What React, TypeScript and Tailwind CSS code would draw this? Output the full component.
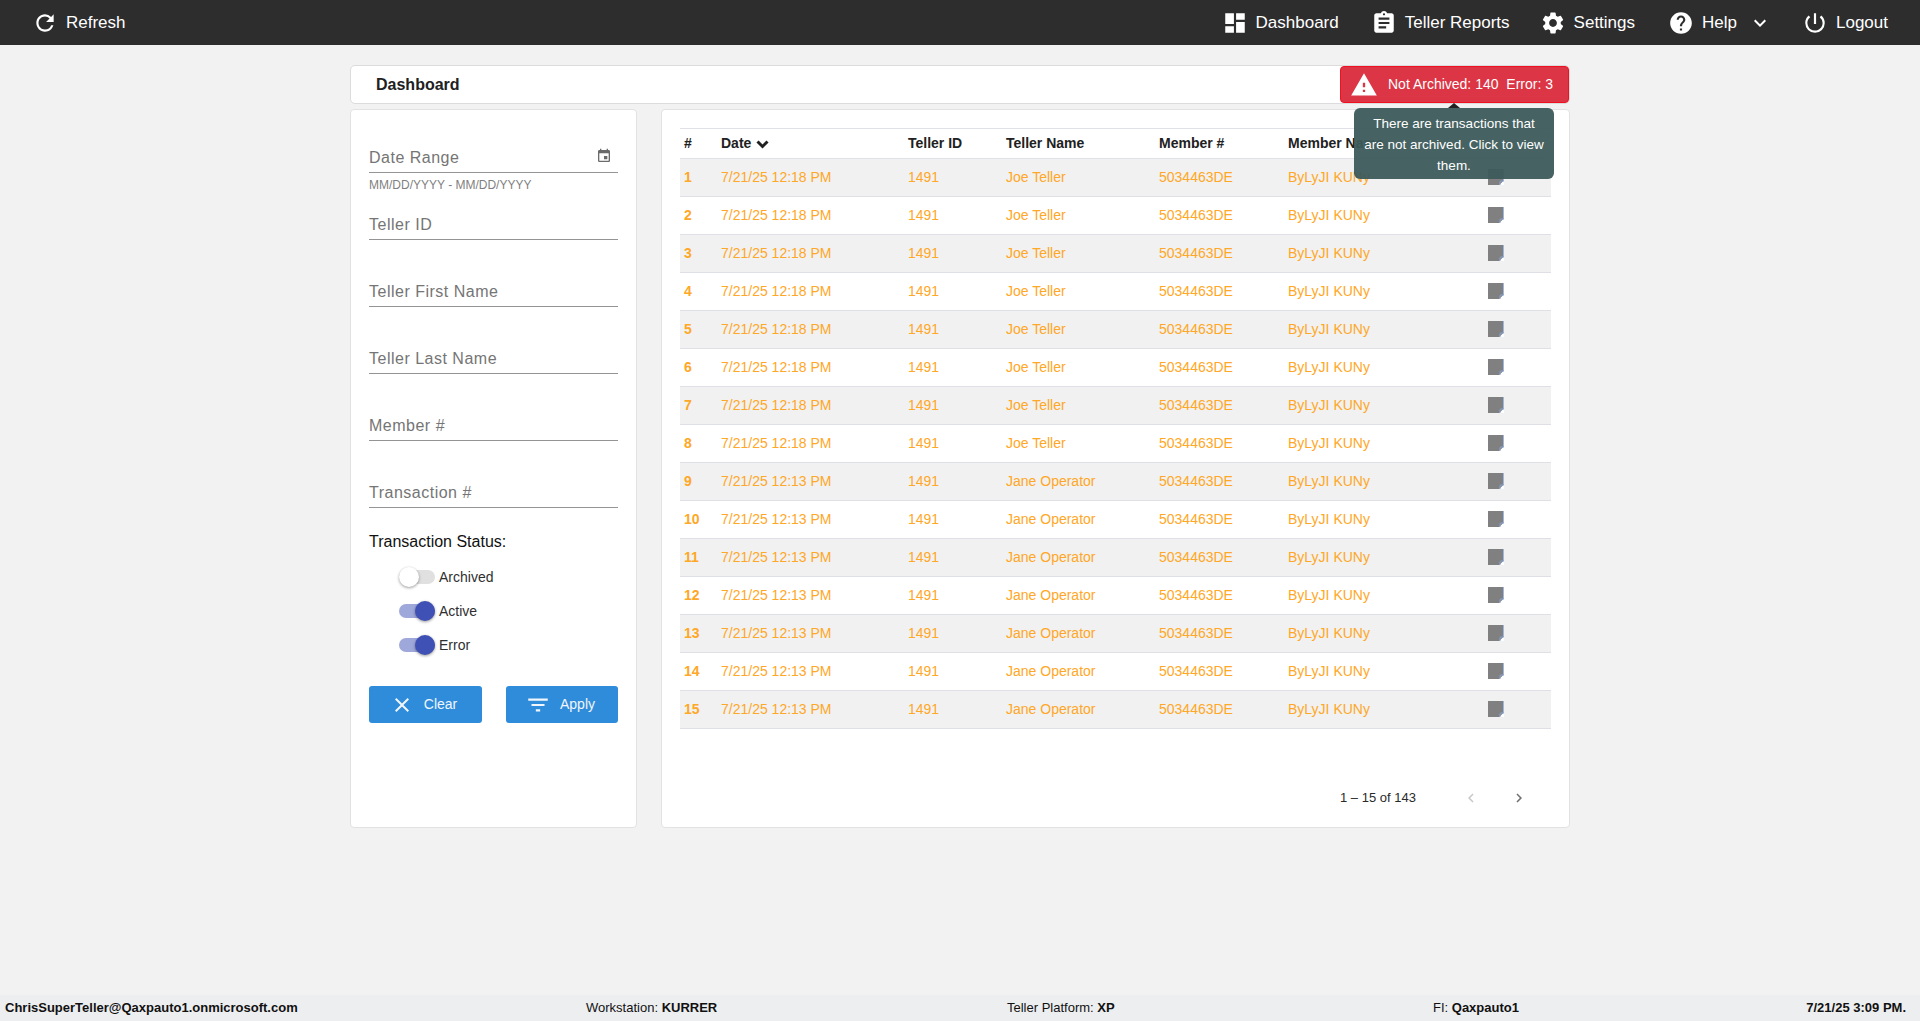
import React from "react";
import {
  MdRefresh, MdDashboard, MdAssignment, MdSettings, MdHelp, MdPowerSettingsNew,
  MdEvent, MdClose, MdFilterList, MdWarning, MdChevronLeft, MdChevronRight, MdKeyboardArrowDown,
} from "react-icons/md";

function NoteIcon() {
  return (
    <svg width="16" height="16" viewBox="0 0 16 16" className="-mt-[2px] block">
      <path d="M0 0h16v11.5L11.5 16H0z" fill="#808080" />
      <path d="M16 11.5V16h-4.5z" fill="#ffffff" />
      <path d="M12 16v-3a1 1 0 0 1 1-1h3" fill="none" stroke="#8aa6d8" strokeWidth="1" />
      <path d="M15.5 0v11.5" stroke="#9db8e0" strokeWidth="1" />
    </svg>
  );
}

const rows = Array.from({ length: 15 }, (_, i) => ({
  n: i + 1,
  date: i < 8 ? "7/21/25 12:18 PM" : "7/21/25 12:13 PM",
  name: i < 8 ? "Joe Teller" : "Jane Operator",
}));

function NavItem({ icon, label, className = "" }: { icon: React.ReactNode; label: string; className?: string }) {
  return (
    <div className={`flex items-center gap-[8px] ${className}`}>
      {icon}
      <span>{label}</span>
    </div>
  );
}

function Field({ label, first = false }: { label: string; first?: boolean }) {
  return (
    <div
      className={`flex items-end border-b border-[#949494] pb-[3px] text-[16px] leading-[22px] tracking-[0.5px] text-[#757575] ${
        first ? "h-[63px]" : "h-[67px]"
      }`}
    >
      {label}
    </div>
  );
}

function Toggle({ on, label }: { on: boolean; label: string }) {
  return (
    <div className="flex h-[34px] items-center pl-[30px] text-[14px] text-[#2f2f2f]">
      <div className="relative mr-[4px] h-[14px] w-[36px]">
        <div className={`absolute inset-0 rounded-full ${on ? "bg-[#9fa8da]" : "bg-[#e0e0e0]"}`} />
        <div
          className={`absolute top-[-3px] h-[20px] w-[20px] rounded-full shadow-[0_1px_3px_rgba(0,0,0,0.4)] ${
            on ? "right-0 bg-[#3f51b5]" : "left-0 bg-white"
          }`}
        />
      </div>
      {label}
    </div>
  );
}

export default function App() {
  return (
    <div className="flex h-[1021px] flex-col overflow-hidden bg-[#f2f2f2] font-['Liberation_Sans',Arial,sans-serif]">
      <header className="flex h-[45px] shrink-0 items-center justify-between bg-[#2d2d2d] pl-[32px] pr-[32px] text-[17px] text-white">
        <div className="flex items-center gap-[8px]">
          <MdRefresh size={26} />
          <span>Refresh</span>
        </div>
        <div className="flex items-center">
          <NavItem icon={<MdDashboard size={26} />} label="Dashboard" className="mr-[32px]" />
          <NavItem icon={<MdAssignment size={26} />} label="Teller Reports" className="mr-[30px]" />
          <NavItem icon={<MdSettings size={26} />} label="Settings" className="mr-[33px]" />
          <NavItem icon={<MdHelp size={26} />} label="Help" />
          <MdKeyboardArrowDown size={24} className="ml-[11px] mr-[30px]" />
          <NavItem icon={<MdPowerSettingsNew size={26} />} label="Logout" />
        </div>
      </header>

      <main className="mx-auto mt-[20px] w-[1220px] flex-1">
        <div className="relative flex h-[39px] items-center justify-between rounded-[5px] border border-[#dcdcdc] bg-white">
          <span className="pl-[25px] text-[16px] font-bold text-[#212121]">Dashboard</span>
          <div className="absolute right-0 top-0 flex h-[37px] w-[229px] items-center rounded-[4px] border border-[#f01020] bg-[#dc3545] pl-[9px] text-[14px] text-white">
            <MdWarning size={28} />
            <span className="ml-[10px] whitespace-pre">Not Archived: 140  Error: 3</span>
          </div>
          <div className="absolute right-[15px] top-[42px] z-10 w-[200px] rounded-[6px] bg-[#3c5a5a]/95 pb-[3px] pt-[5px] text-center text-[13.5px] leading-[21px] whitespace-nowrap text-white">
            <div className="absolute left-1/2 top-[-5px] h-0 w-0 -translate-x-1/2 border-x-[6px] border-b-[5px] border-x-transparent border-b-[#222]" />
            There are transactions that
            <br />
            are not archived. Click to view
            <br />
            them.
          </div>
        </div>

        <div className="mt-[5px] flex gap-[24px]">
          <aside className="h-[719px] w-[287px] shrink-0 rounded-[4px] border border-[#e2e2e2] bg-white px-[18px]">
            <div className="relative">
              <Field label="Date Range" first />
              <MdEvent size={16} className="absolute right-[6px] top-[38px] text-[#6b6b6b]" />
              <div className="absolute left-0 top-[67px] text-[12px] leading-[16px] text-[#7f7f7f]">MM/DD/YYYY - MM/DD/YYYY</div>
            </div>
            <Field label="Teller ID" />
            <Field label="Teller First Name" />
            <Field label="Teller Last Name" />
            <Field label="Member #" />
            <Field label="Transaction #" />
            <div className="mt-[24px] text-[16px] leading-[20px] text-[#111]">Transaction Status:</div>
            <div className="mt-[8px]">
              <Toggle on={false} label="Archived" />
              <Toggle on label="Active" />
              <Toggle on label="Error" />
            </div>
            <div className="mt-[24px] flex justify-between">
              <button className="flex h-[37px] w-[113px] items-center justify-center gap-[10px] rounded-[3px] bg-[#2f8cdb] pr-[4px] text-[14px] text-[#f0f6fc]">
                <MdClose size={24} />
                Clear
              </button>
              <button className="flex h-[37px] w-[112px] items-center justify-center gap-[9px] rounded-[3px] bg-[#2f8cdb] pr-[4px] text-[14px] text-[#f0f6fc]">
                <MdFilterList size={26} />
                Apply
              </button>
            </div>
          </aside>

          <section className="h-[719px] flex-1 rounded-[4px] border border-[#e2e2e2] bg-white px-[18px] pt-[18px]">
            <table className="w-full table-fixed border-collapse text-[14px]">
              <thead>
                <tr className="h-[30px] border-y border-[#e0e0e8] text-left font-bold text-[#212121]">
                  <th className="w-[41px] pl-[4px]">#</th>
                  <th className="w-[187px]">
                    <span className="inline-flex items-center gap-[5px]">
                      Date
                      <svg width="13" height="9" viewBox="0 0 13 9" className="mt-[1px]">
                        <path d="M1.5 1.5 6.5 6.5 11.5 1.5" fill="none" stroke="#212121" strokeWidth="3" />
                      </svg>
                    </span>
                  </th>
                  <th className="w-[98px]">Teller ID</th>
                  <th className="w-[153px]">Teller Name</th>
                  <th className="w-[129px]">Member #</th>
                  <th className="w-[200px]">Member Name</th>
                  <th></th>
                </tr>
              </thead>
              <tbody>
                {rows.map((r) => (
                  <tr key={r.n} className={`h-[38px] border-b border-[#dfdfe6] text-[#ffa726] ${r.n % 2 ? "bg-[#f1f1f1]" : "bg-white"}`}>
                    <td className="pl-[4px] font-bold">{r.n}</td>
                    <td>{r.date}</td>
                    <td>1491</td>
                    <td>{r.name}</td>
                    <td>5034463DE</td>
                    <td>ByLyJI KUNy</td>
                    <td>
                      <NoteIcon />
                    </td>
                  </tr>
                ))}
              </tbody>
            </table>
            <div className="mt-[59px] flex items-center text-[13px] text-[#2a2a2a]">
              <span className="ml-[660px]">1 – 15 of 143</span>
              <MdChevronLeft size={18} className="ml-[46px] text-[#c8c8c8]" />
              <MdChevronRight size={18} className="ml-[30px] text-[#6f6f6f]" />
            </div>
          </section>
        </div>
      </main>

      <footer className="relative flex h-[26px] shrink-0 items-center bg-[#edeef0] pl-[5px] pr-[14px] text-[13px] text-[#111]">
        <span className="w-[581px] font-bold">ChrisSuperTeller@Qaxpauto1.onmicrosoft.com</span>
        <span className="w-[421px]">Workstation: <b>KURRER</b></span>
        <span className="w-[426px]">Teller Platform: <b>XP</b></span>
        <span className="flex-1">FI: <b>Qaxpauto1</b></span>
        <span className="font-bold">7/21/25 3:09 PM.</span>
      </footer>
    </div>
  );
}
